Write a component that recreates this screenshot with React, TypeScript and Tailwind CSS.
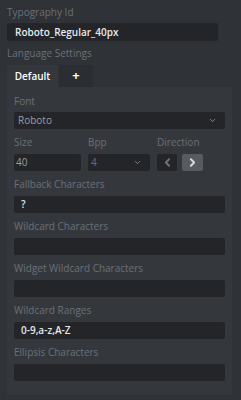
import { ChevronDown, ChevronLeft, ChevronRight } from 'lucide-react';

const font = { fontFamily: '"Open Sans", "Noto Sans", sans-serif' };

function Label({ children }: { children: React.ReactNode }) {
  return <div className="text-[10px] leading-[12px] text-[#6b7076]">{children}</div>;
}

function TextField({ label, value = '' }: { label: string; value?: string }) {
  return (
    <div className="flex flex-col gap-[6px]">
      <Label>{label}</Label>
      <div className="h-[17px] rounded-[2px] bg-[#232528] px-[7px] flex items-center text-[10px] font-semibold text-[#e4e6e8]">
        {value}
      </div>
    </div>
  );
}

export default function App() {
  return (
    <div className="w-[241px] h-[400px] bg-[#2f3337] pt-[6px] px-[7px]" style={font}>
      <Label>Typography Id</Label>
      <div className="mt-[5px] w-[211px] h-[18px] rounded-[2px] bg-[#232528] px-[8px] flex items-center text-[10px] font-semibold text-[#e8eaec]">
        Roboto_Regular_40px
      </div>
      <div className="mt-[6px]">
        <Label>Language Settings</Label>
      </div>

      {/* tabs */}
      <div className="mt-[6px] flex">
        <div className="w-[51px] h-[22px] bg-[#34383c] rounded-t-[2px] flex items-center justify-center text-[10px] font-semibold text-white">
          Default
        </div>
        <div className="ml-[1px] w-[34px] h-[22px] bg-[#2a2d31] rounded-t-[2px] flex items-center justify-center text-[13px] font-bold text-white">
          +
        </div>
      </div>

      {/* panel */}
      <div className="w-[225px] bg-[#34383c] px-[7px] pt-[8px] pb-[14px] flex flex-col gap-[7px]">
        <div className="flex flex-col gap-[5px]">
          <Label>Font</Label>
          <div className="h-[17px] rounded-[2px] bg-[#232528] pl-[4px] pr-[8px] flex items-center justify-between text-[10px] text-[#9a9ea3]">
            Roboto
            <ChevronDown size={9} strokeWidth={2.5} className="text-[#8a8e93]" />
          </div>
        </div>

        <div className="flex gap-[7px]">
          <div className="flex flex-col gap-[6px] w-[67px]">
            <Label>Size</Label>
            <div className="h-[17px] rounded-[2px] bg-[#232528] px-[2px] flex items-center text-[10px] text-[#9a9ea3]">40</div>
          </div>
          <div className="flex flex-col gap-[6px] w-[62px]">
            <Label>Bpp</Label>
            <div className="h-[17px] rounded-[2px] bg-[#232528] pl-[3px] pr-[8px] flex items-center justify-between text-[10px] text-[#6b7076]">
              4
              <ChevronDown size={9} strokeWidth={2.5} className="text-[#7a7e83]" />
            </div>
          </div>
          <div className="flex flex-col gap-[6px]">
            <Label>Direction</Label>
            <div className="flex gap-[5px]">
              <div className="w-[20px] h-[17px] rounded-[2px] bg-[#232528] flex items-center justify-center">
                <ChevronLeft size={13} strokeWidth={3.5} className="text-[#6e7378]" />
              </div>
              <div className="w-[21px] h-[17px] rounded-[2px] bg-[#585c62] flex items-center justify-center">
                <ChevronRight size={13} strokeWidth={3.5} className="text-[#d8dadc]" />
              </div>
            </div>
          </div>
        </div>

        <TextField label="Fallback Characters" value="?" />
        <TextField label="Wildcard Characters" />
        <TextField label="Widget Wildcard Characters" />
        <TextField label="Wildcard Ranges" value="0-9,a-z,A-Z" />
        <TextField label="Ellipsis Characters" />
      </div>
    </div>
  );
}
